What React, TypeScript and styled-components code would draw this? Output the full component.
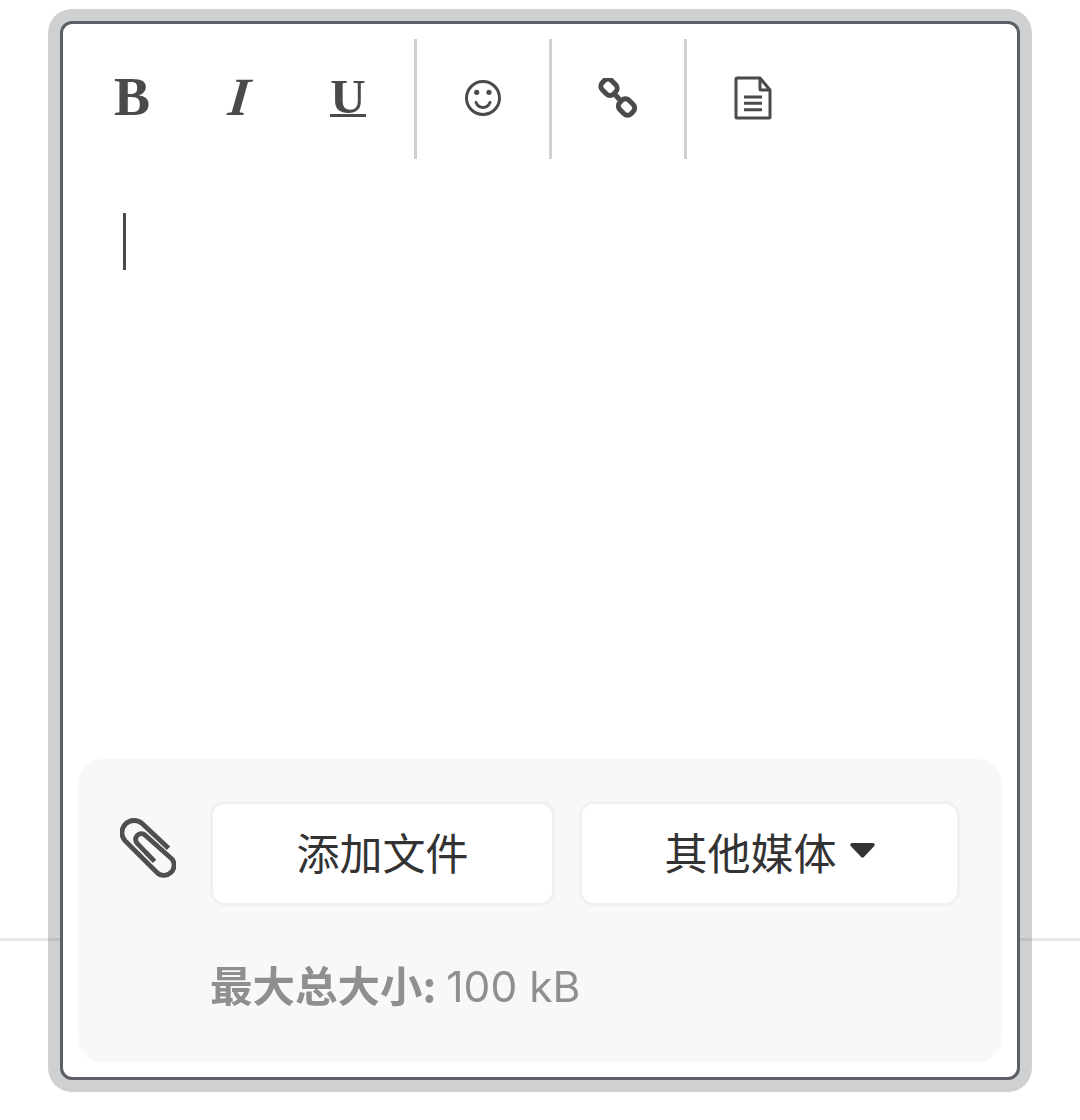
import React from 'react';
import styled, { createGlobalStyle } from 'styled-components';

const GlobalStyle = createGlobalStyle`
  html, body {
    margin: 0;
    padding: 0;
    background: #fff;
  }
`;

const Page = styled.div`
  position: relative;
  width: 1080px;
  height: 1120px;
  box-sizing: border-box;
  padding: 21px 60px;
  overflow: hidden;
  font-family: Inter, 'Noto Sans CJK SC', sans-serif;
`;

const Rule = styled.div`
  position: absolute;
  left: 0;
  right: 0;
  top: 938px;
  height: 3px;
  background: #e8e8e8;
`;

const Frame = styled.div`
  position: relative;
  display: flex;
  flex-direction: column;
  height: 1059px;
  box-sizing: border-box;
  border: 3px solid #5c6066;
  border-radius: 12px;
  background: #fff;
  box-shadow: 0 0 0 12px rgba(98, 102, 108, 0.31);
`;

const Toolbar = styled.div`
  display: flex;
  padding: 15px 15px 0;
`;

const ToolButton = styled.div`
  display: flex;
  align-items: center;
  justify-content: center;
  width: 108px;
  height: 120px;
  box-sizing: border-box;
  padding-bottom: 2px;
  color: #4a4a4a;
`;

const Letter = styled.span<{ $italic?: boolean }>`
  margin-bottom: 2px;
  font-family: 'Liberation Serif', serif;
  font-size: 54px;
  line-height: 1;
  font-weight: 700;
  font-style: ${({ $italic }) => ($italic ? 'italic' : 'normal')};
  transform: ${({ $italic }) => ($italic ? 'skewX(-6deg)' : 'none')};
`;

const UnderlinedLetter = styled.span`
  width: 36px;
  height: 37px;
  margin-bottom: 3px;
  border-bottom: 3px solid #4a4a4a;
  text-align: center;
  font-family: 'Liberation Serif', serif;
  font-size: 49px;
  line-height: 40px;
  font-weight: 700;
`;

const Separator = styled.div`
  width: 3px;
  height: 120px;
  margin: 0 12px;
  background: #d0d0d0;
`;

const Editor = styled.div`
  flex: 1;
  padding: 54px 0 0 60px;
`;

const Caret = styled.div`
  width: 3px;
  height: 57px;
  background: #4a4a4a;
`;

const Attachments = styled.div`
  height: 303px;
  box-sizing: border-box;
  margin: 0 15px 15px;
  padding-top: 42px;
  border-radius: 24px;
  background: #f8f8f8;
`;

const ButtonRow = styled.div`
  display: flex;
  align-items: flex-start;
`;

const ClipSlot = styled.div`
  width: 132px;
  box-sizing: border-box;
  padding: 17px 0 0 42px;
  color: #4f4f4f;
`;

const FileButton = styled.div<{ $width: number }>`
  display: flex;
  align-items: center;
  justify-content: center;
  gap: 13px;
  width: ${({ $width }) => $width}px;
  height: 105px;
  box-sizing: border-box;
  margin-right: 24px;
  padding-bottom: 6px;
  border: 3px solid #f0f0f0;
  border-radius: 15px;
  background: #fff;
  color: #333;
  font-family: 'Noto Sans CJK SC', sans-serif;
  font-size: 43px;
  transform: translateZ(0);
`;

const Limit = styled.div`
  margin: 48px 0 0 132px;
  color: #8f8f8f;
  font-size: 42.500px;
  font-weight: 380;
  line-height: 60px;
  transform: translateZ(0);
`;

const LimitLabel = styled.b`
  margin-right: -2px;
  font-family: 'Noto Sans CJK SC', sans-serif;
  font-weight: 700;
`;

const SmileIcon = () => (
  <svg width="36" height="36" viewBox="0 0 36 36" fill="none" stroke="currentColor" strokeWidth="3">
    <circle cx="18" cy="18" r="16.5" />
    <circle cx="11.7" cy="12.3" r="2.6" fill="currentColor" stroke="none" />
    <circle cx="24" cy="12.3" r="2.6" fill="currentColor" stroke="none" />
    <path d="M11 22.5c1.5 3.5 4 5 7 5s5.500-1.500 7-5" strokeLinecap="round" />
  </svg>
);

const LinkIcon = () => (
  <svg width="40" height="40" viewBox="0 0 40 40" fill="none" stroke="currentColor" strokeWidth="5">
    <rect x="3" y="2.750" width="16" height="13" rx="5" transform="rotate(45 11 9.250)" />
    <rect x="20.500" y="22.500" width="16" height="13" rx="5" transform="rotate(45 28.500 29)" />
    <path d="M17.500 17l4 4.500" />
  </svg>
);

const DocIcon = () => (
  <svg width="38" height="44" viewBox="0 0 38 44" fill="none" stroke="currentColor" strokeWidth="3" strokeLinejoin="round">
    <path d="M26 2H3a1 1 0 0 0-1 1v38a1 1 0 0 0 1 1h32a1 1 0 0 0 1-1V14z" />
    <path d="M26 2v11a1 1 0 0 0 1 1h9" />
    <path d="M10 21h18M10 27.300h18M10 33.700h18" />
  </svg>
);

const ClipIcon = () => (
  <svg width="56" height="62" viewBox="0 0 60 66" fill="none" stroke="currentColor" strokeWidth="5.200" strokeLinecap="butt">
    <path d="M52 32.300L23.700 5.700A13 13 0 0 0 5.300 24L40.300 59A11 11 0 0 0 56 44L27 18.300A6 6 0 0 0 18.700 27.300L37 46.300" />
  </svg>
);

const CaretDown = () => (
  <svg width="25" height="15" viewBox="0 0 26 16" fill="#333">
    <path d="M2 0h22a2 2 0 0 1 1.500 3.300L14.500 15a2 2 0 0 1-3 0L.5 3.300A2 2 0 0 1 2 0z" />
  </svg>
);

const App = () => {
  return (
    <Page>
      <GlobalStyle />
      <Rule />
      <Frame>
        <Toolbar>
          <ToolButton><Letter>B</Letter></ToolButton>
          <ToolButton><Letter $italic>I</Letter></ToolButton>
          <ToolButton><UnderlinedLetter>U</UnderlinedLetter></ToolButton>
          <Separator />
          <ToolButton><SmileIcon /></ToolButton>
          <Separator />
          <ToolButton><LinkIcon /></ToolButton>
          <Separator />
          <ToolButton><DocIcon /></ToolButton>
        </Toolbar>
        <Editor>
          <Caret />
        </Editor>
        <Attachments>
          <ButtonRow>
            <ClipSlot><ClipIcon /></ClipSlot>
            <FileButton $width={345}>添加文件</FileButton>
            <FileButton $width={381}>
              其他媒体
              <CaretDown />
            </FileButton>
          </ButtonRow>
          <Limit>
            <LimitLabel>最大总大小:</LimitLabel> 100 kB
          </Limit>
        </Attachments>
      </Frame>
    </Page>
  );
};

export default App;
